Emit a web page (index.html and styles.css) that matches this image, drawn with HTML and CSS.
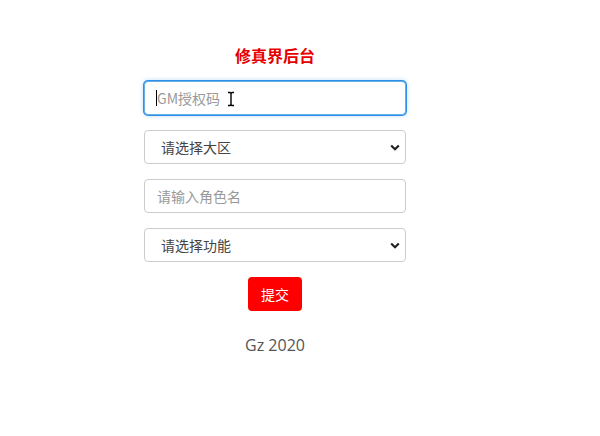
FILE: index.html
```html
<!DOCTYPE html>
<html>
<head>
    <title>修真界后台</title>
    <meta name="viewport" content="width=device-width, initial-scale=1.0">
    <link rel="stylesheet" href="styles.css">
</head>
<body>
    <div id="page">
        <h3 class="title">修真界后台</h3>
        <form id="gm-form">
            <div class="field focused">
                <input type="text" class="form-control" placeholder="GM授权码">
                <span class="caret"></span>
                <svg class="ibeam" width="8" height="16" viewBox="0 0 8 16">
                    <path d="M1 1.5h2l1 1 1-1h2M4 2.5v11M1 14.5h2l1-1 1 1h2" fill="none" stroke="#000" stroke-width="1.4"/>
                </svg>
            </div>
            <div class="field">
                <select class="form-control">
                    <option>请选择大区</option>
                </select>
            </div>
            <div class="field">
                <input type="text" class="form-control" placeholder="请输入角色名">
            </div>
            <div class="field">
                <select class="form-control">
                    <option>请选择功能</option>
                </select>
            </div>
            <button type="button" class="btn-submit">提交</button>
        </form>
        <p class="footer">Gz 2020</p>
    </div>
</body>
</html>
```

FILE: styles.css
```css
* {
    box-sizing: border-box;
    margin: 0;
    padding: 0;
}

body {
    font-family: "Open Sans", "Noto Sans CJK SC", sans-serif;
    background: #fff;
    color: #555;
}

#page {
    width: 550px;
    display: flex;
    flex-direction: column;
    align-items: center;
    padding-top: 44px;
}

.title {
    color: #e60000;
    font-size: 16px;
    font-weight: bold;
    line-height: 22px;
    font-family: "Noto Sans CJK SC", sans-serif;
    margin-bottom: 15px;
}

#gm-form {
    width: 262px;
    display: flex;
    flex-direction: column;
    align-items: center;
    gap: 15px;
}

.field {
    position: relative;
    width: 100%;
}

.form-control {
    display: block;
    width: 100%;
    height: 34px;
    padding: 0 12px;
    font-family: "Noto Sans CJK SC", sans-serif;
    font-size: 14px;
    color: #444;
    background: #fff;
    border: 1px solid #ccc;
    border-radius: 4px;
    outline: none;
}

.form-control::placeholder {
    color: #999;
}

select.form-control {
    appearance: none;
    -webkit-appearance: none;
    padding-left: 16px;
    background-image: url("data:image/svg+xml;utf8,<svg xmlns='http://www.w3.org/2000/svg' width='10' height='7' viewBox='0 0 10 7'><path d='M1.2 1.5L5 5.2 8.8 1.5' fill='none' stroke='%23222' stroke-width='2.2'/></svg>");
    background-repeat: no-repeat;
    background-position: right 5px center;
}

.focused .form-control {
    border-color: #66afe9;
    box-shadow: 0 0 0 1px #2d8fe8, 0 0 5px rgba(102, 175, 233, 0.6);
}

.caret {
    position: absolute;
    left: 12px;
    top: 9px;
    width: 1px;
    height: 16px;
    background: #000;
}

.ibeam {
    position: absolute;
    left: 83px;
    top: 10px;
}

.btn-submit {
    width: 54px;
    height: 34px;
    background: #f00;
    color: #fff;
    border: none;
    border-radius: 4px;
    font-family: "Noto Sans CJK SC", sans-serif;
    font-size: 14px;
    cursor: pointer;
}

.footer {
    margin-top: 23px;
    font-size: 16px;
    line-height: 22px;
    color: #555;
}
```
